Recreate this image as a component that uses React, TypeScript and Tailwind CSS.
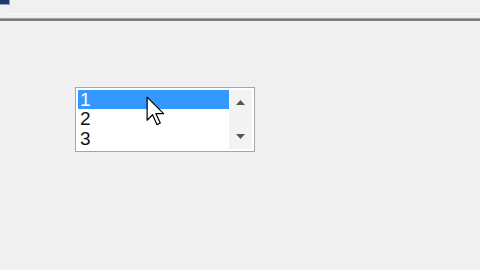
export default function App() {
  return (
    <div className="w-[480px] h-[270px] bg-[#f0f0f0] relative overflow-hidden" style={{ fontFamily: '"Liberation Sans", Arial, sans-serif' }}>
      {/* top strip */}
      <div className="h-[21px] flex flex-col">
        <div className="flex h-[13px]">
          <div className="w-[10px] h-[5px] bg-[#1f3b6b] border-r border-b border-[#8aa0c8]" />
        </div>
        <div className="h-[1px] ml-[8px] bg-[#fbfbfb]" />
        <div className="h-[4px]" />
        <div className="h-[1px] bg-[#a0a0a0]" />
        <div className="h-[2px] bg-[#7a7a7a]" />
      </div>

      <div className="pt-[66px] pl-[75px]">
        <div className="w-[180px] h-[65px] border border-[#a6a6a6] bg-white p-[2px] flex">
          <div className="flex-1 flex flex-col text-[19px] leading-[19.5px] text-[#111]">
            <div className="bg-[#3399ff] text-white pl-[2px] h-[19px] leading-[20px]">1</div>
            <div className="pl-[2px]">2</div>
            <div className="pl-[2px]">3</div>
          </div>
          <div className="w-[23px] bg-[#f3f3f3] flex flex-col items-center justify-between py-[10px]">
            <svg width="9" height="5" viewBox="0 0 9 5"><path d="M0 5 L4.5 0 L9 5 Z" fill="#555" /></svg>
            <svg width="9" height="5" viewBox="0 0 9 5"><path d="M0 0 L4.5 5 L9 0 Z" fill="#555" /></svg>
          </div>
        </div>
      </div>

      {/* mouse cursor */}
      <svg className="absolute left-[146px] top-[96px]" width="22" height="32" viewBox="0 0 20 29">
        <path d="M1 1 L1 22 L6 17 L10 26 L13 24.5 L9 16 L16 16 Z" fill="#fff" stroke="#000" strokeWidth="1.1" strokeLinejoin="round" />
      </svg>
    </div>
  )
}
